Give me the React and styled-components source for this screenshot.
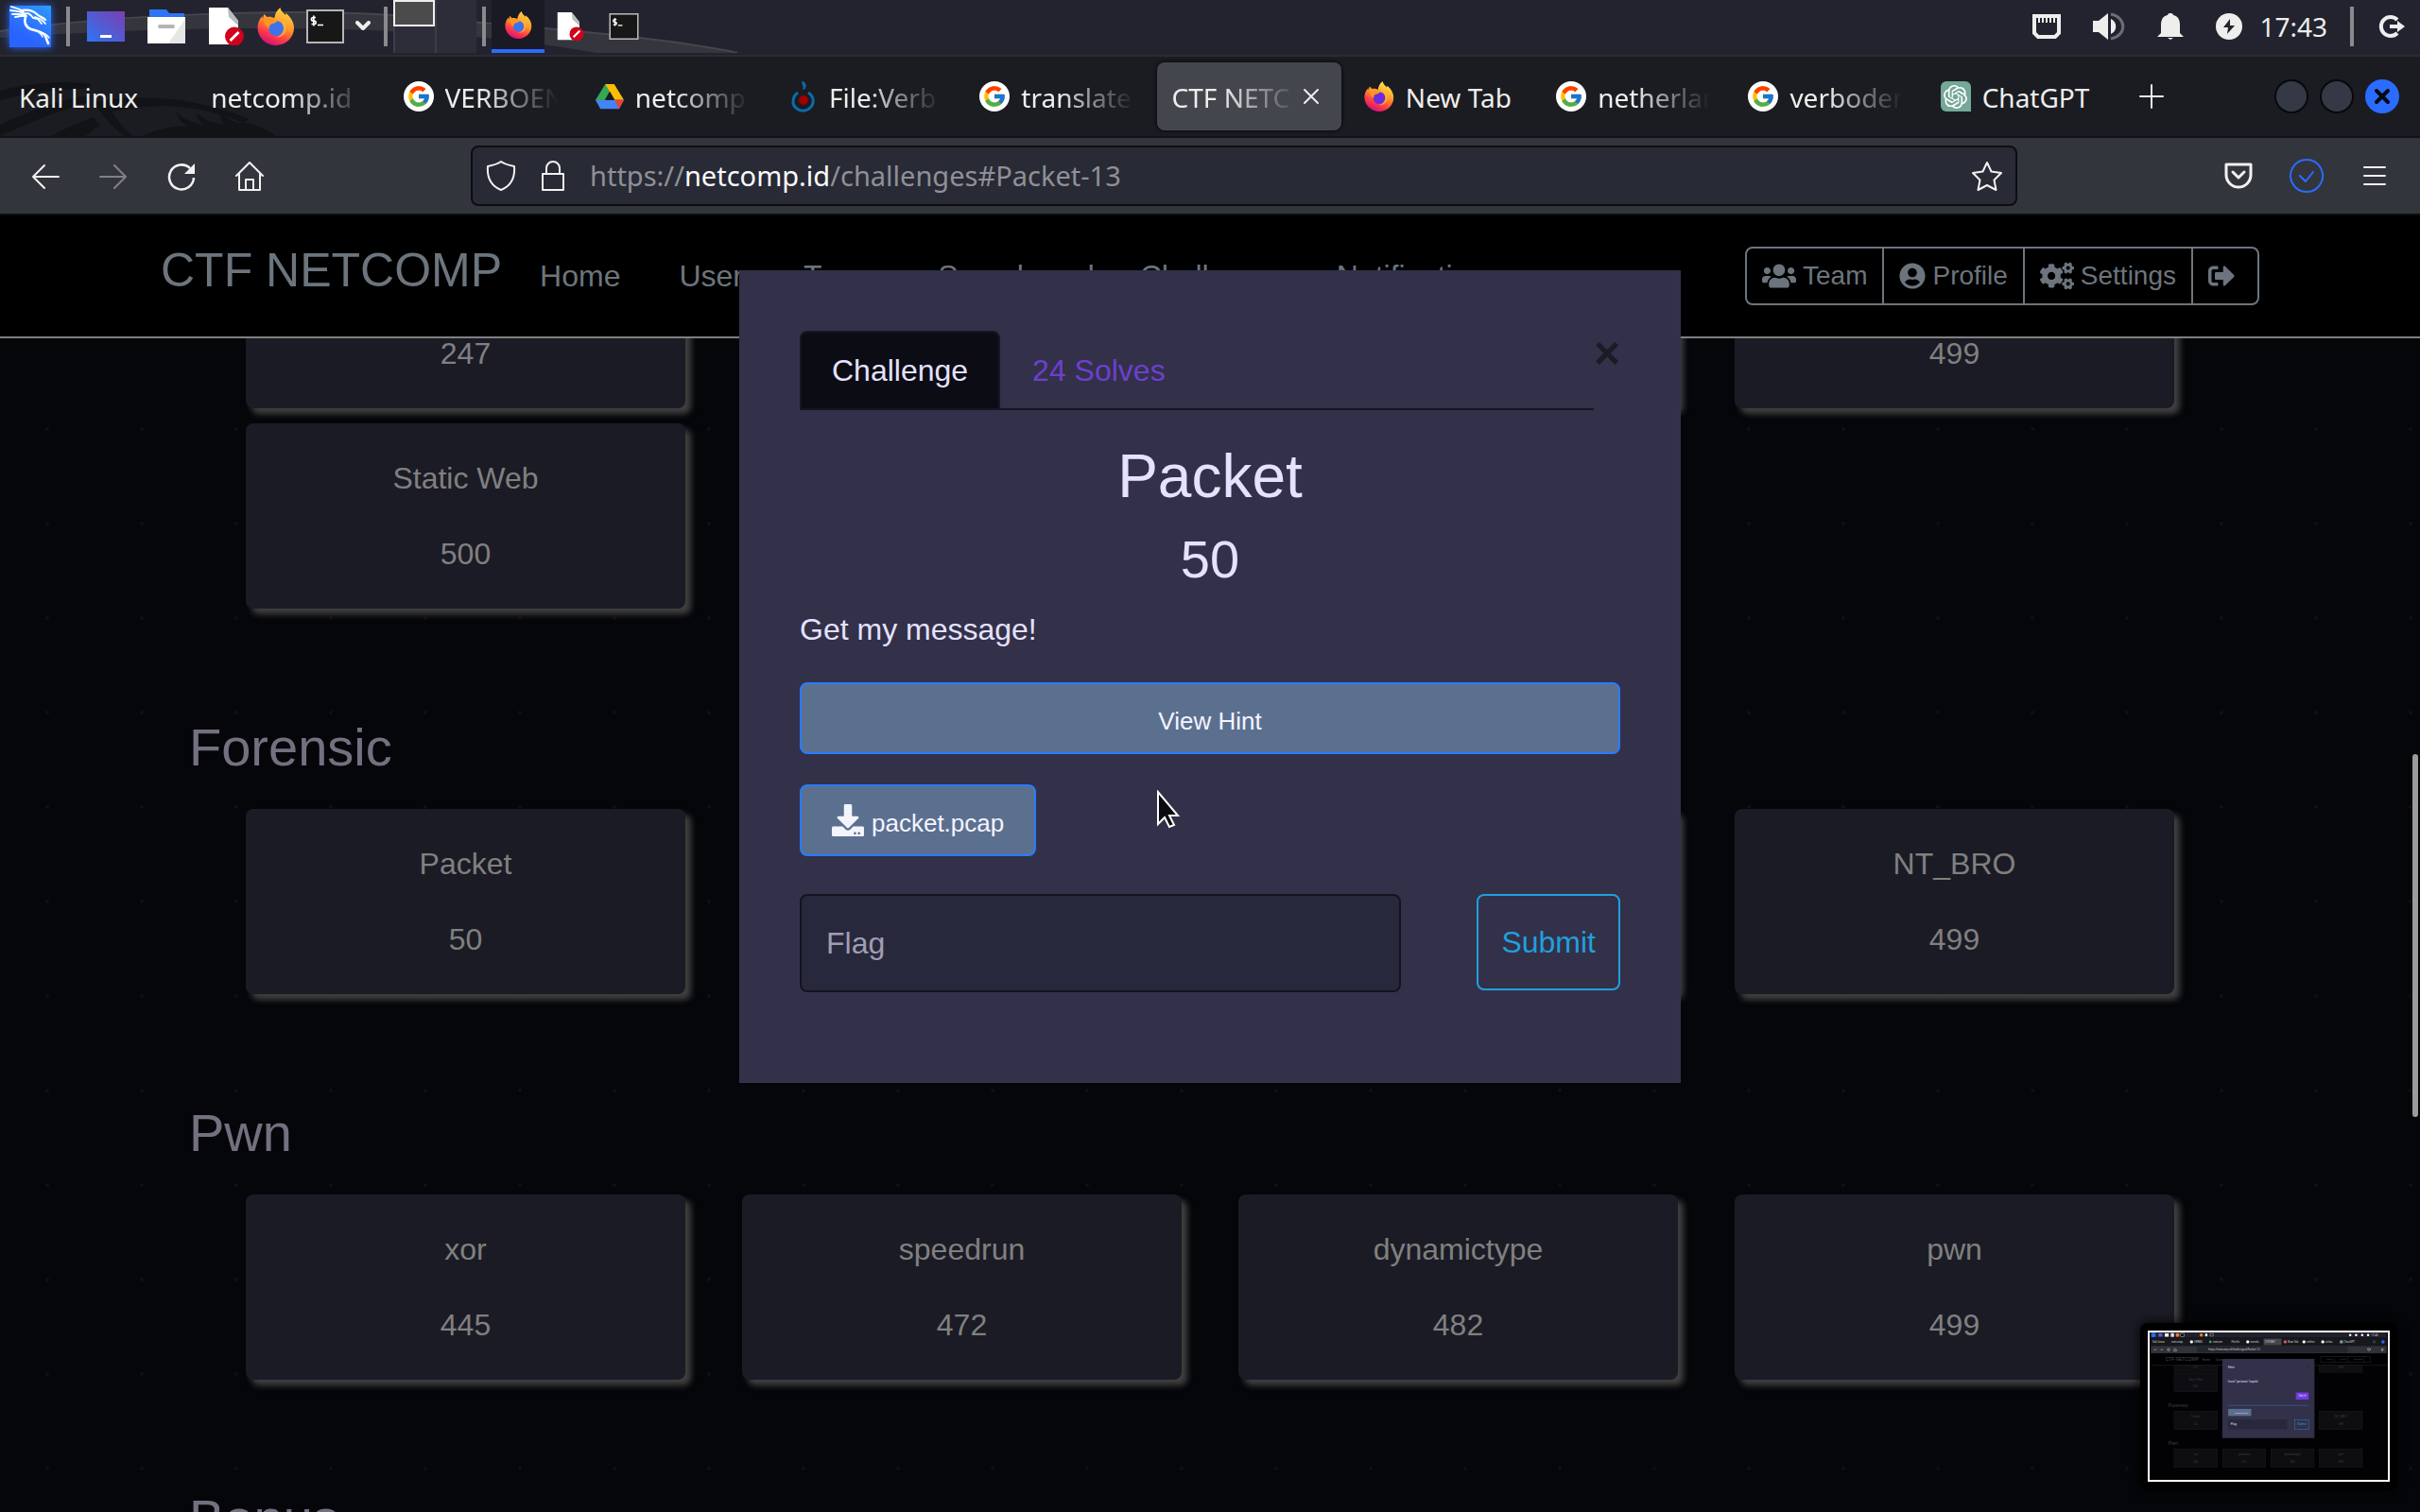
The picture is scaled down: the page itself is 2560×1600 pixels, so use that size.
import React from 'react';
import styled, { createGlobalStyle, css } from 'styled-components';
import { FaUsers, FaUserCircle, FaCogs, FaSignOutAlt, FaDownload } from 'react-icons/fa';
import { FcGoogle } from 'react-icons/fc';
import { SiOpenai } from 'react-icons/si';

const Global = createGlobalStyle`
  *, *::before, *::after { box-sizing: border-box; }
  html, body, #root { height: 100%; }
  body { margin: 0; background: #05060a; overflow: hidden; }
  button, input { font: inherit; margin: 0; }
`;

const uiFont = css`font-family: "Noto Sans", "Open Sans", sans-serif;`;
const pageFont = css`font-family: "Liberation Sans", Arial, sans-serif;`;

const Desktop = styled.div`
  display: flex;
  flex-direction: column;
  height: 100vh;
  overflow: hidden;
`;

/* ---------- desktop panel ---------- */

const Panel = styled.header`
  ${uiFont}
  position: relative;
  display: flex;
  align-items: center;
  height: 60px;
  padding: 0 16px 2px 10px;
  background: #22232f;
  border-bottom: 2px solid #2b2c31;
  color: #eeeeec;
  font-size: 28px;
  svg { display: block; flex: none; }
`;

const Backdrop = styled.svg`
  position: absolute;
  left: 0;
  top: 0;
  pointer-events: none;
`;

const PanelGroup = styled.div`
  position: relative;
  display: flex;
  align-items: center;
  height: 56px;
  gap: ${(p) => p.$gap || 0}px;
  margin-left: ${(p) => p.$left || 0}px;
`;

const PanelRight = styled(PanelGroup)`
  margin-left: auto;
`;

const Separator = styled.span`
  width: 4px;
  height: 42px;
  background: #8a8a8e;
`;

const IconButton = styled.button`
  display: flex;
  align-items: center;
  justify-content: center;
  flex: none;
  padding: 0;
  border: 0;
  background: none;
  color: inherit;
`;

const KaliMenu = styled(IconButton)`
  width: 44px;
  height: 44px;
  color: #fff;
  background: linear-gradient(30deg, #2a64ff 30%, #2e9bff);
  box-shadow: 0 0 8px #2a6cff;
`;

const Pager = styled.div`
  display: grid;
  grid-template-columns: 44px 44px;
  grid-template-rows: 28px 28px;
  background: #2c2d39;
`;

const Workspace = styled.button`
  padding: 0;
  background: ${(p) => (p.$active ? '#4b4b4b' : 'transparent')};
  border: solid ${(p) => (p.$active ? '#eeeeec' : '#3c3d4b')};
  border-width: ${(p) => (p.$active ? '2px' : '0 0 0 2px')};
`;

const Task = styled(IconButton)`
  width: 56px;
  height: 56px;
  ${(p) => p.$active && 'background: #191a23; border-bottom: 4px solid #2a6cff;'}
`;

const Clock = styled.time`
  line-height: 40px;
`;

/* ---------- browser chrome ---------- */

const TabBar = styled.div`
  ${uiFont}
  position: relative;
  display: flex;
  height: 86px;
  background: #1b1c21;
  border-bottom: 2px solid #121317;
  color: #eeeeec;
  font-size: 28px;
`;

const Strip = styled.nav`
  position: relative;
  display: flex;
  flex: 1;
  min-width: 0;
  padding: 6px 0;
`;

const Tab = styled.a`
  display: flex;
  align-items: center;
  flex: 1 1 0;
  min-width: 0;
  gap: 12px;
  margin: 0 4px;
  padding: 0 16px;
  border-radius: 8px;
  color: inherit;
  text-decoration: none;
  line-height: 40px;
  svg { display: block; flex: none; }
  ${(p) => p.$active && `
    background: #44464d;
    box-shadow: 0 0 4px #000;
    gap: 4px;
    > svg { margin-right: 6px; }
  `}
`;

const TabTitle = styled.span`
  flex: 1;
  min-width: 0;
  padding-top: 2px;
  overflow: hidden;
  white-space: nowrap;
  ${(p) => p.$fade && 'mask-image: linear-gradient(to left, transparent, #000 80px);'}
`;

const GoogleBadge = styled.span`
  display: grid;
  place-items: center;
  flex: none;
  width: 32px;
  height: 32px;
  border-radius: 50%;
  background: #fff;
`;

const ChatBadge = styled(GoogleBadge)`
  border-radius: 6px 6px 0 6px;
  background: #74a899;
  color: #fff;
`;

const WindowArea = styled.div`
  position: relative;
  display: flex;
  align-items: center;
  justify-content: space-between;
  flex: none;
  width: 324px;
  padding: 0 22px 0 4px;
`;

const WindowButtons = styled.div`
  display: flex;
  gap: 12px;
`;

const WindowButton = styled(IconButton)`
  width: 36px;
  height: 36px;
  border-radius: 50%;
  background: ${(p) => (p.$close ? '#2a6cff' : '#353946')};
  ${(p) => !p.$close && 'border: 2px solid #08090c;'}
`;

const Toolbar = styled.div`
  ${uiFont}
  display: flex;
  align-items: center;
  height: 82px;
  background: #33353d;
  border-bottom: 2px solid #0b0d10;
  color: #f2f2f0;
  font-size: 29px;
  svg { display: block; flex: none; }
`;

const NavButtons = styled.div`
  display: flex;
  flex: none;
  width: 498px;
  padding-left: 12px;
`;

const ToolButton = styled(IconButton)`
  width: 72px;
  height: 64px;
  opacity: ${(p) => (p.disabled ? 0.4 : 1)};
`;

const UrlBox = styled.div`
  display: flex;
  align-items: center;
  flex: 1;
  min-width: 0;
  height: 64px;
  padding: 0 14px;
  gap: 25px;
  background: #282a35;
  border: 2px solid #0c0d12;
  border-radius: 8px;
`;

const Url = styled.span`
  flex: 1;
  min-width: 0;
  line-height: 40px;
  color: #8f9097;
  b { font-weight: 400; color: #fbfbfe; }
`;

const ToolEnd = styled.div`
  display: flex;
  justify-content: flex-end;
  flex: none;
  width: 426px;
  padding-right: 12px;
`;

/* ---------- web page ---------- */

const Page = styled.div`
  ${pageFont}
  position: relative;
  flex: 1;
  min-height: 0;
  overflow: hidden;
  font-size: 32px;
  line-height: 48px;
  background: #05060a radial-gradient(circle at 50px 26px, #0f0f13 2px, transparent 2px) 0 0 / 100px 100px;
`;

const NavBar = styled.header`
  position: absolute;
  inset: 0 0 auto 0;
  z-index: 1;
  background: #000;
  border-bottom: 2px solid #7f7f7f;
`;

const NavInner = styled.div`
  display: flex;
  align-items: center;
  max-width: 2220px;
  height: 128px;
  margin: 0 auto;
  color: #6c757d;
`;

const NavLinks = styled.nav`
  display: flex;
  align-items: baseline;
  gap: 48px;
  padding-bottom: 12px;
  a { color: inherit; text-decoration: none; }
`;

const Brand = styled.a`
  margin-right: -8px;
  font-size: 50px;
  line-height: 60px;
`;

const NavLink = styled.a`
  &:nth-child(2) { margin-right: 14px; }
`;

const ButtonGroup = styled.div`
  display: flex;
  margin-left: auto;
  height: 62px;
  border: 2px solid #6c757d;
  border-radius: 8px;
  font-size: 28px;
`;

const GroupButton = styled.button`
  display: flex;
  align-items: center;
  gap: 7px;
  padding: 0 16px;
  background: none;
  border: 0;
  color: inherit;
  & + & { border-left: 2px solid #6c757d; }
  &:last-child { padding-right: 24px; }
`;

const Content = styled.main`
  display: flex;
  flex-direction: column;
  gap: 116px;
  max-width: 2160px;
  margin: 0 auto;
  padding-top: 8px;
`;

const Heading = styled.h3`
  margin: 0 0 34px;
  font-size: 56px;
  line-height: 62px;
  font-weight: 400;
  color: #747080;
`;

const CardGrid = styled.div`
  display: grid;
  grid-template-columns: repeat(4, 1fr);
  gap: 16px 60px;
  padding: 0 60px;
`;

const Card = styled.button`
  display: flex;
  flex-direction: column;
  align-items: center;
  gap: 32px;
  padding: 34px 16px;
  background: #1b1b26;
  border: 0;
  border-radius: 8px;
  box-shadow: 6px 6px 6px #404040;
  color: #80807f;
`;

const CardLine = styled.span`
  display: block;
  min-height: 48px;
`;

const ScrollThumb = styled.div`
  position: absolute;
  right: 2px;
  top: 570px;
  width: 6px;
  height: 384px;
  border-radius: 3px;
  background: #9c9c9f;
`;

/* ---------- challenge dialog ---------- */

const Overlay = styled.div`
  position: absolute;
  inset: 0;
  z-index: 2;
  display: flex;
  justify-content: center;
  align-items: flex-start;
  padding-top: 58px;
`;

const Dialog = styled.section`
  width: 996px;
  max-width: 90%;
  padding: 64px 64px 96px;
  background: #323149;
  color: #e6e1ff;
`;

const DialogTop = styled.div`
  display: flex;
  align-items: flex-start;
  margin-bottom: 32px;
`;

const DialogTabs = styled.div`
  display: flex;
  flex: 1;
  border-bottom: 2px solid #151623;
`;

const DialogTab = styled.button`
  padding: 16px 32px;
  line-height: 48px;
  border: 2px solid ${(p) => (p.$active ? '#151623' : 'transparent')};
  border-bottom: 0;
  border-radius: 8px 8px 0 0;
  background: ${(p) => (p.$active ? '#0b0c14' : 'none')};
  color: ${(p) => (p.$active ? '#e6e1ff' : '#6d3fd0')};
`;

const Close = styled.button`
  width: 28px;
  padding: 0;
  border: 0;
  background: none;
  font-size: 48px;
  line-height: 48px;
  font-weight: 700;
  color: #1b1b26;
`;

const ChallengeName = styled.h2`
  margin: 0 0 16px;
  font-size: 64px;
  line-height: 76px;
  font-weight: 400;
  text-align: center;
`;

const ChallengeValue = styled.h3`
  margin: 0 0 16px;
  font-size: 56px;
  line-height: 68px;
  font-weight: 400;
  text-align: center;
`;

const Description = styled.p`
  margin: 0 0 32px;
`;

const InfoButton = styled.button`
  display: flex;
  align-items: center;
  justify-content: center;
  gap: 8px;
  width: ${(p) => (p.$block ? '100%' : 'auto')};
  height: 76px;
  margin-bottom: ${(p) => (p.$block ? 32 : 40)}px;
  padding: 0 32px;
  background: #5b708f;
  border: 2px solid #2a7bff;
  border-radius: 8px;
  color: #f4f4ff;
  font-size: 26px;
  line-height: 40px;
  span { padding-top: 6px; }
`;

const FlagForm = styled.form`
  display: flex;
  align-items: flex-start;
  gap: 80px;
`;

const FlagInput = styled.input`
  flex: 1;
  min-width: 0;
  height: 104px;
  padding: 0 26px;
  background: #28283c;
  border: 2px solid #13141e;
  border-radius: 8px;
  color: #a3a0b5;
  outline: 0;
  &::placeholder { color: #a09db3; opacity: 1; }
`;

const Submit = styled.button`
  height: 102px;
  padding: 0 24px;
  background: none;
  border: 2px solid #219fdc;
  border-radius: 8px;
  color: #219fdc;
`;

const Pointer = styled.svg`
  position: absolute;
  left: 1223px;
  top: 836px;
  z-index: 4;
`;

const Preview = styled.aside`
  position: absolute;
  right: 24px;
  bottom: 24px;
  z-index: 3;
  padding: 8px;
  background: #000;
  border-radius: 8px;
  box-shadow: 0 0 12px #000;
  svg { display: block; border: 2px solid #fff; }
`;

/* ---------- drawings ---------- */

const KaliDragon = () => (
  <svg width="44" height="44" viewBox="0 0 44 44" fill="none" stroke="#fff" strokeLinecap="round" aria-hidden="true">
    <path d="M2 1l9 3 6 5M1 5l9 1 7 4M3 9l7 0 7 2M6 12l6-1 6 0" strokeWidth="1.800" />
    <path d="M13 5c6-1 12 0 16 4 3 3 6 3 9 6" strokeWidth="2.400" />
    <path d="M18 8c3 0 5 2 7 5l5 1 4 5M27 12c4 1 8 3 11 7" strokeWidth="1.800" />
    <path d="M17 12c-2 5 0 11 6 13s12 2 15 7l3 8" strokeWidth="2.600" />
    <path d="M24 25c5 1 9 4 11 8M33 29c5 0 7 2 9 5" strokeWidth="1.400" />
  </svg>
);

const Firefox = ({ size, bright }) => (
  <svg width={size} height={size} viewBox="0 0 40 40" aria-hidden="true">
    <defs>
      <linearGradient id={`ff${size}`} x1="0.8" y1="0" x2="0.35" y2="1">
        <stop offset="0" stopColor={bright ? '#fff44f' : '#ffd84a'} />
        <stop offset="0.45" stopColor="#ff9a2a" />
        <stop offset="0.75" stopColor="#ff3b47" />
        <stop offset="1" stopColor="#d3107a" />
      </linearGradient>
    </defs>
    <path
      d="M24.500 0c.6 4 3.500 5.500 5.500 8l.5-2c5 4 8.500 9.500 8.500 15.500C39 31.500 30.500 40 20 40S.5 31.500.5 21c0-4.500 1.800-9 5-12l.5 3 1.200-5c1 .5 2.300 1.800 3 3 3-.8 6 0 8 1.200C19 6.500 21 2.500 24.500 0z"
      fill={`url(#ff${size})`}
    />
    <circle cx="20" cy="22" r="8" fill={bright ? '#6a2be0' : '#3d72ea'} />
    <path d="M7 13c3-3 7-3 10-.5l4.500 1c-.5 2-2.500 3-5 3.500-3 .8-4 2.500-3.500 5.500C10 20 7 17 7 13z" fill="#ff9420" />
    <path d="M28 13c4 4 4 10 1.500 14-2 3.500-6 5-10 4.500 5-1 8.500-5 8.500-9.500 0-3-1-5-3-7l3-2z" fill="#ffb43a" opacity="0.7" />
  </svg>
);

const Doc = ({ size }) => (
  <svg width={size} height={size} viewBox="0 0 40 40" aria-hidden="true">
    <path d="M1 0h20l11 14v25H1z" fill="#fff" />
    <path d="M21 0l11 14v5l-10-9z" fill="#b9bbbd" />
    <circle cx="28" cy="30.500" r="10" fill="#d0021b" />
    <path d="M23.500 35l9-9" stroke="#fff" strokeWidth="3" />
  </svg>
);

const Terminal = ({ w, h }) => (
  <svg width={w} height={h} viewBox="0 0 40 36" aria-hidden="true">
    <rect x="1" y="1" width="38" height="34" fill="#171717" stroke="#b5b5b5" strokeWidth="2" />
    <path d="M10 8.500H7.200a1.500 1.500 0 0 0 0 3.500h1.200a1.500 1.500 0 0 1 0 3.500H5.500M7.800 6.500v11M12 16.500h6" stroke="#fff" strokeWidth="1.700" fill="none" />
  </svg>
);

const Drive = () => (
  <svg width="30" height="28" viewBox="0 0 32 28" aria-hidden="true">
    <path d="M11 0h10L5.500 27 0 18z" fill="#34a853" />
    <path d="M11 0h10l11 18H21.500z" fill="#fbbc04" />
    <path d="M5.500 28L0 18h32l-5.500 10z" fill="#4285f4" />
    <path d="M21.500 18H32l-5.500 10z" fill="#ea4335" />
    <path d="M16 8.500L21.500 18h-11z" fill="#1b1c21" />
  </svg>
);

const Flame = () => (
  <svg width="32" height="34" viewBox="-4 0 32 34" aria-hidden="true">
    <path d="M7 13C1 17 0 26 6 30c4 3 10 3 14-1 5-5 4-12-2-16" fill="none" stroke="#0a6cab" strokeWidth="3" />
    <path d="M12 1c-1 4 2 5 1 9 3-2 3-7-1-9z" fill="#0a6cab" stroke="#0a6cab" />
    <circle cx="13" cy="21" r="5" fill="#a00000" />
  </svg>
);

const GoogleIcon = () => (
  <GoogleBadge><FcGoogle size={26} /></GoogleBadge>
);

const Line = ({ size = 32, d, color = 'currentColor', width = 2, height }) => (
  <svg width={size} height={height || size} viewBox={`0 0 ${size} ${height || size}`} fill="none" stroke={color} strokeWidth={width} strokeLinejoin="round" strokeLinecap="round" aria-hidden="true">
    <path d={d} />
  </svg>
);

const tabs = [
  { title: 'Kali Linux' },
  { title: 'netcomp.id |', fade: true },
  { title: 'VERBOEN', fade: true, icon: <GoogleIcon /> },
  { title: 'netcomp.', fade: true, icon: <Drive /> },
  { title: 'File:Verb', fade: true, icon: <Flame /> },
  { title: 'translate', fade: true, icon: <GoogleIcon /> },
  { title: 'CTF NETC', fade: true, active: true },
  { title: 'New Tab', icon: <Firefox size={32} bright /> },
  { title: 'netherlan', fade: true, icon: <GoogleIcon /> },
  { title: 'verboden', fade: true, icon: <GoogleIcon /> },
  { title: 'ChatGPT', icon: <ChatBadge><SiOpenai size={25} /></ChatBadge> },
];

const links = ['Home', 'Users', 'Teams', 'Scoreboard', 'Challenges', 'Notifications'];

const sections = [
  { cards: [['', '247'], ['', ''], ['', ''], ['', '499'], ['Static Web', '500']] },
  { title: 'Forensic', cards: [['Packet', '50'], ['', ''], ['', ''], ['NT_BRO', '499']] },
  { title: 'Pwn', cards: [['xor', '445'], ['speedrun', '472'], ['dynamictype', '482'], ['pwn', '499']] },
  { title: 'Bonus', cards: [] },
];

const miniCards = [
  [254, 358, 'M', '', '247'], [1830, 358, 'M', '', '499'],
  [254, 448, 'L', 'Static Web', '500'],
  [254, 856, 'L', 'Packet', '50'], [1830, 856, 'L', 'NT_BRO', '499'],
  [254, 1264, 'L', 'xor', '445'], [780, 1264, 'L', 'speedrun', '472'],
  [1305, 1264, 'L', 'dynamictype', '482'], [1830, 1264, 'L', 'pwn', '499'],
];

function MiniScreen() {
  const sans = '"Liberation Sans", Arial, sans-serif';
  const noto = '"Noto Sans", sans-serif';
  return (
    <svg width="256" height="160" viewBox="0 0 2560 1600" role="img" aria-label="Screenshot preview">
      <rect width="2560" height="1600" fill="#020204" />
      <rect width="2560" height="58" fill="#20212c" />
      <rect y="58" width="2560" height="88" fill="#17181d" />
      <rect y="146" width="2560" height="82" fill="#303239" />
      <rect x="500" y="154" width="1632" height="64" fill="#23252f" />
      <rect x="6" y="4" width="46" height="46" fill="#2a6cff" />
      <rect x="84" y="10" width="42" height="36" fill="#5560d8" />
      <rect x="152" y="10" width="42" height="36" fill="#fff" />
      <rect x="218" y="8" width="34" height="40" fill="#f3dcdc" />
      <circle cx="290" cy="28" r="20" fill="#ff7a30" />
      <rect x="324" y="10" width="40" height="36" fill="#111" stroke="#ccc" strokeWidth="5" />
      <circle cx="548" cy="28" r="18" fill="#ff7a30" />
      <rect x="590" y="12" width="24" height="30" fill="#fff" />
      <rect x="644" y="12" width="32" height="28" fill="#111" stroke="#ccc" strokeWidth="5" />
      <rect x="1224" y="66" width="194" height="72" fill="#44464d" />
      <g fill="#fff">
        {[442, 1052, 1662, 1866].map((x) => <circle key={x} cx={x} cy="102" r="17" />)}
        {[2164, 2228, 2294, 2358].map((x) => <circle key={x} cx={x} cy="28" r="13" />)}
      </g>
      <circle cx="1458" cy="102" r="17" fill="#ff4a58" />
      <circle cx="646" cy="102" r="14" fill="#34a853" />
      <rect x="2052" y="86" width="32" height="32" fill="#74a899" />
      <circle cx="2424" cy="102" r="17" fill="#353946" />
      <circle cx="2520" cy="102" r="18" fill="#2a6cff" />
      <g fill="#dedede" fontFamily={noto} fontSize="29">
        <text x="20" y="114">Kali Linux</text>
        <text x="224" y="114">netcomp.</text>
        <text x="470" y="114">VERBO</text>
        <text x="674" y="114">netcom</text>
        <text x="876" y="114">File:Ve</text>
        <text x="1080" y="114">transla</text>
        <text x="1240" y="114">CTF NET</text>
        <text x="1486" y="114">New Tab</text>
        <text x="1690" y="114">nether</text>
        <text x="1894" y="114">verbo</text>
        <text x="2096" y="114">ChatGPT</text>
        <text x="2392" y="38">17:43</text>
        <text x="624" y="198">https://netcomp.id/challenges#Packet-13</text>
      </g>
      <path d="M34 187h28m44 0h28M180 187a13 13 0 1 0 26 0a13 13 0 1 0-26 0M250 187l14-14 14 14v14h-28zM2354 175h28v14q-14 20-28 0zM2500 178h24m-24 9h24m-24 9h24" stroke="#e5e5e5" strokeWidth="5" fill="none" />
      <rect y="228" width="2560" height="128" fill="#000" />
      <path d="M0 356h2560" stroke="#303030" strokeWidth="5" />
      <g fill="#4b5055" fontFamily={sans}>
        <text x="160" y="304" fontSize="50">CTF NETCOMP</text>
        <text x="560" y="304" fontSize="32">Home</text>
        <text x="706" y="304" fontSize="32">Users</text>
        <text x="1908" y="302" fontSize="26">Team</text>
        <text x="2050" y="302" fontSize="26">Profile</text>
        <text x="2200" y="302" fontSize="26">Settings</text>
      </g>
      <path d="M1844 262h540v62h-540zM1990 262v62M2138 262v62M2316 262v62" stroke="#34383c" strokeWidth="4" fill="none" />
      {miniCards.map(([x, y, kind, title, value], i) => (
        <g key={i} fontFamily={sans} fontSize="32" textAnchor="middle" fill="#3d3d40">
          <rect x={x} y={y} width="466" height={kind === 'M' ? 74 : 196} fill="#0d0d12" stroke="#1c1c1f" strokeWidth="6" />
          <text x={x + 233} y={y + 70}>{title}</text>
          <text x={x + 233} y={y + (kind === 'M' ? 30 : 150)}>{value}</text>
        </g>
      ))}
      <g fill="#3d3b44" fontFamily={sans} fontSize="56">
        <text x="190" y="810">Forensic</text>
        <text x="190" y="1218">Pwn</text>
      </g>
      <rect x="776" y="286" width="1000" height="860" fill="#323149" />
      <g fill="#e6e1ff" fontFamily={sans} fontSize="38">
        <text x="840" y="388">Hint</text>
        <text x="840" y="540" fontSize="32">huruf &quot;pertama&quot; kapital</text>
        <text x="1690" y="388" fill="#15151c">×</text>
        <rect x="1574" y="650" width="140" height="78" rx="8" fill="#6f3be0" />
        <text x="1602" y="702" fontSize="32">Got it!</text>
        <path d="M840 792h872" stroke="#3a5a95" strokeWidth="8" />
        <rect x="840" y="830" width="250" height="76" fill="#5b708f" />
        <text x="914" y="880" fontSize="26">packet.pcap</text>
        <rect x="840" y="946" width="640" height="104" fill="#28283c" />
        <text x="868" y="1010" fontSize="32">Flag</text>
        <rect x="1562" y="946" width="150" height="102" fill="none" stroke="#219fdc" strokeWidth="4" />
        <text x="1588" y="1008" fontSize="32" fill="#219fdc">Submit</text>
      </g>
    </svg>
  );
}

export default function App() {
  return (
    <Desktop>
      <Global />
      <Panel>
        <Backdrop width="860" height="56" viewBox="0 0 860 56" aria-hidden="true">
          <path d="M0 33C130 14 330 8 440 18S700 38 780 56H630C500 32 300 20 0 40z" fill="#34353d" />
          <path d="M0 33C130 14 330 8 440 18S700 38 780 56" fill="none" stroke="#45464c" strokeWidth="2" />
        </Backdrop>
        <PanelGroup>
          <KaliMenu aria-label="Applications"><KaliDragon /></KaliMenu>
        </PanelGroup>
        <PanelGroup $left={16}><Separator /></PanelGroup>
        <PanelGroup $gap={24} $left={18}>
          <IconButton aria-label="Show desktop">
            <svg width="40" height="32" viewBox="0 0 40 32" aria-hidden="true">
              <defs>
                <linearGradient id="desk" x1="0" y1="1" x2="1" y2="0">
                  <stop offset="0" stopColor="#2e75f5" /><stop offset="1" stopColor="#7a3fae" />
                </linearGradient>
              </defs>
              <rect width="40" height="32" fill="url(#desk)" />
              <path d="M14 26.500h12" stroke="#fff" strokeWidth="3" />
            </svg>
          </IconButton>
          <IconButton aria-label="Files">
            <svg width="40" height="36" viewBox="0 0 40 36" aria-hidden="true">
              <path d="M2 12V0h18l3 4h16v8z" fill="#2e75f5" />
              <path d="M0 8h40v28H0z" fill="#fff" />
              <path d="M40 10v26H22z" fill="#e6e6e6" />
              <path d="M13 18h14" stroke="#b4b4b4" strokeWidth="4" strokeLinecap="round" />
            </svg>
          </IconButton>
          <IconButton aria-label="Text editor"><Doc size={40} /></IconButton>
        </PanelGroup>
        <PanelGroup $gap={12} $left={12}>
          <IconButton aria-label="Firefox"><Firefox size={40} /></IconButton>
          <IconButton aria-label="Terminal"><Terminal w={40} h={36} /></IconButton>
          <IconButton aria-label="More launchers"><Line size={16} height={12} width={4} d="M2 2l6 6 6-6" /></IconButton>
        </PanelGroup>
        <PanelGroup $left={14}><Separator /></PanelGroup>
        <PanelGroup $left={6} $gap={6}>
          <Pager>
            <Workspace $active aria-label="Workspace 1" />
            <Workspace aria-label="Workspace 2" />
            <Workspace aria-label="Workspace 3" />
            <Workspace aria-label="Workspace 4" />
          </Pager>
          <Separator />
        </PanelGroup>
        <PanelGroup $left={6}>
          <Task $active aria-label="Firefox window"><Firefox size={29} /></Task>
          <Task aria-label="Editor window"><Doc size={30} /></Task>
          <Task aria-label="Terminal window"><Terminal w={32} h={28} /></Task>
        </PanelGroup>
        <PanelRight $gap={24}>
          <PanelGroup $gap={34}>
            <svg width="30" height="26" viewBox="0 0 30 26" aria-hidden="true">
              <path d="M2 2h26v18l-4 4H6l-4-4z" fill="none" stroke="#eeeeec" strokeWidth="4" />
              <path d="M7 3v6m4-6v6m4-6v6m4-6v6m4-6v6" stroke="#eeeeec" strokeWidth="2" />
            </svg>
            <svg width="34" height="30" viewBox="0 0 34 30" aria-hidden="true">
              <path d="M0 9h6L16 1v28L6 21H0z" fill="#eeeeec" />
              <path d="M19 7c7 3 7 13 0 16z" fill="#eeeeec" />
              <path d="M19 2c17 3 17 23 0 26" fill="none" stroke="#6d6e75" strokeWidth="3" />
            </svg>
            <svg width="28" height="28" viewBox="0 0 28 28" aria-hidden="true">
              <path d="M14 0c3 0 3 2 3 2 5 1 7 5 7 10v9l4 4H0l4-4v-9c0-5 2-9 7-10 0 0 0-2 3-2zM11 26h6l-3 2z" fill="#eeeeec" />
            </svg>
            <PanelGroup $gap={18}>
              <svg width="28" height="28" viewBox="0 0 28 28" aria-hidden="true">
                <circle cx="14" cy="14" r="14" fill="#eeeeec" />
                <path d="M15 6l-7 9h5l-1 7 8-9h-5z" fill="#22232f" />
              </svg>
              <Clock>17:43</Clock>
            </PanelGroup>
          </PanelGroup>
          <PanelGroup $gap={26}>
            <Separator />
            <svg width="28" height="26" viewBox="0 0 28 26" aria-hidden="true">
              <path d="M20 6a10 10 0 1 0 0 14" fill="none" stroke="#eeeeec" strokeWidth="4" />
              <path d="M12 11h8V7l8 6-8 6v-4h-8z" fill="#eeeeec" />
            </svg>
          </PanelGroup>
        </PanelRight>
      </Panel>

      <TabBar>
        <Backdrop width="300" height="84" viewBox="0 0 300 84" aria-hidden="true">
          <path d="M0 36C30 28 60 26 96 28v6C60 34 30 38 0 46zM0 72C30 58 60 46 90 42l4 6C60 58 30 70 0 84zM54 84c14-8 30-14 44-20l8 8-16 12zM100 48c60-12 120 0 164 18l-6 4c-50-20-90-22-140-12 8 12 14 18 22 26h-8C118 74 108 62 100 48zM150 84c18-8 36-12 50-10-8-4-12-8-14-16 8 8 16 12 30 14-6-4-8-8-8-12 8 6 16 10 28 12l-4-12c12 8 22 12 30 10 12 4 22 8 30 14z" fill="#121317" />
        </Backdrop>
        <Strip aria-label="Browser tabs">
          {tabs.map((t, i) => (
            <Tab key={i} href="#tab" $active={t.active}>
              {t.icon}
              <TabTitle $fade={t.fade}>{t.title}</TabTitle>
              {t.active && <Line size={20} d="M3 3l14 14M17 3L3 17" />}
            </Tab>
          ))}
        </Strip>
        <WindowArea>
          <ToolButton aria-label="New tab"><Line size={28} d="M14 2v24M2 14h24" width={2} /></ToolButton>
          <WindowButtons>
            <WindowButton aria-label="Minimise" />
            <WindowButton aria-label="Maximise" />
            <WindowButton $close aria-label="Close window"><Line size={20} d="M4 4l12 12M16 4L4 16" width={4} color="#08090c" /></WindowButton>
          </WindowButtons>
        </WindowArea>
      </TabBar>

      <Toolbar>
        <NavButtons>
          <ToolButton aria-label="Back"><Line d="M15 5L3 17l12 12M3 17h27" /></ToolButton>
          <ToolButton aria-label="Forward" disabled><Line d="M17 5l12 12-12 12M29 17H2" /></ToolButton>
          <ToolButton aria-label="Reload">
            <svg width="32" height="32" viewBox="0 0 32 32" aria-hidden="true">
              <path d="M25 8A13 13 0 1 0 29 18" fill="none" stroke="currentColor" strokeWidth="2.500" />
              <path d="M30 3v11H19z" fill="currentColor" />
            </svg>
          </ToolButton>
          <ToolButton aria-label="Home"><Line d="M2 16L16 2l14 14M5 14v17h22V14M12 31V20h8v11" /></ToolButton>
        </NavButtons>
        <UrlBox>
          <Line d="M16 1c4 3 9 4 14 5 1 12-4 21-14 25C6 27 1 18 2 6 7 5 12 4 16 1z" />
          <Line size={28} height={32} d="M3 14h22v17H3zM7 14V8a7 7 0 0 1 14 0v6" width={2} />
          <Url>https://<b>netcomp.id</b>/challenges#Packet-13</Url>
          <Line d="M16 2l4.500 9.500L31 13l-7.500 7.500L25.500 31 16 26l-9.500 5 2-10.500L1 13l10.500-1.500z" />
        </UrlBox>
        <ToolEnd>
          <ToolButton aria-label="Pocket"><Line size={30} height={28} d="M2 2h26v11a13 13 0 0 1-26 0zM9 10l6 6 6-6" width={3} /></ToolButton>
          <ToolButton aria-label="Protection"><Line size={38} d="M19 2a17 17 0 1 0 .1 0zM12 19l6 6 8-10" color="#2a6cff" /></ToolButton>
          <ToolButton aria-label="Menu"><Line size={26} height={24} d="M2 3h22M2 12h22M2 21h22" width={2} /></ToolButton>
        </ToolEnd>
      </Toolbar>

      <Page>
        <NavBar>
          <NavInner>
            <NavLinks>
              <Brand href="#home">CTF NETCOMP</Brand>
              {links.map((l) => <NavLink key={l} href={`#${l}`}>{l}</NavLink>)}
            </NavLinks>
            <ButtonGroup>
              <GroupButton><FaUsers size={36} />Team</GroupButton>
              <GroupButton><FaUserCircle size={28} />Profile</GroupButton>
              <GroupButton><FaCogs size={36} />Settings</GroupButton>
              <GroupButton aria-label="Log out"><FaSignOutAlt size={28} /></GroupButton>
            </ButtonGroup>
          </NavInner>
        </NavBar>
        <Content>
          {sections.map((s, i) => (
            <section key={i}>
              {s.title && <Heading>{s.title}</Heading>}
              <CardGrid>
                {s.cards.map(([name, value], j) => (
                  <Card key={j}>
                    <CardLine>{name}</CardLine>
                    <CardLine>{value}</CardLine>
                  </Card>
                ))}
              </CardGrid>
            </section>
          ))}
        </Content>
        <ScrollThumb />
        <Overlay>
          <Dialog role="dialog" aria-label="Packet">
            <DialogTop>
              <DialogTabs>
                <DialogTab $active>Challenge</DialogTab>
                <DialogTab>24 Solves</DialogTab>
              </DialogTabs>
              <Close aria-label="Close">×</Close>
            </DialogTop>
            <ChallengeName>Packet</ChallengeName>
            <ChallengeValue>50</ChallengeValue>
            <Description>Get my message!</Description>
            <InfoButton $block><span>View Hint</span></InfoButton>
            <InfoButton><FaDownload size={34} /><span>packet.pcap</span></InfoButton>
            <FlagForm onSubmit={(e) => e.preventDefault()}>
              <FlagInput aria-label="Flag" placeholder="Flag" />
              <Submit type="submit">Submit</Submit>
            </FlagForm>
          </Dialog>
        </Overlay>
        <Preview><MiniScreen /></Preview>
      </Page>

      <Pointer width="30" height="44" viewBox="0 0 30 44" aria-hidden="true">
        <path d="M2 2v34l7-7 5 10 5-2-5-10h9z" fill="#0b0b0d" stroke="#fff" strokeWidth="2" />
      </Pointer>
    </Desktop>
  );
}
